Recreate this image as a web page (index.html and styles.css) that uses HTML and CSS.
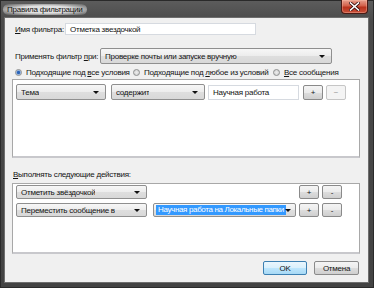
FILE: index.html
```html
<!DOCTYPE html>
<html lang="ru">
<head>
<meta charset="utf-8">
<title>Правила фильтрации</title>
<link rel="stylesheet" href="styles.css">
</head>
<body>
<div class="window">
  <div class="titlebar">
    <span class="title">Правила фильтрации</span>
    <span class="close">
      <svg width="11" height="9" viewBox="0 0 11 9"><path d="M1.5 1 L9.5 8 M9.5 1 L1.5 8" stroke="#3a1010" stroke-width="3.2" stroke-linecap="square"/><path d="M1.5 1 L9.5 8 M9.5 1 L1.5 8" stroke="#ffffff" stroke-width="1.6" stroke-linecap="square"/></svg>
    </span>
  </div>
  <div class="client">
    <div class="row name-row">
      <span class="lbl name-lbl"><u>И</u>мя фильтра:</span>
      <div class="textbox name-input">Отметка звездочкой</div>
    </div>
    <div class="row apply-row">
      <span class="lbl apply-lbl">Применять фильтр <u>п</u>ри:</span>
      <div class="combo apply-combo"><span class="ctext">Проверке почты или запуске вручную</span><i class="arrow"></i></div>
    </div>
    <div class="radios">
      <span class="radio-item r1"><i class="radio checked"></i>Подходящие под&nbsp;<u>в</u>се условия</span>
      <span class="radio-item r2"><i class="radio"></i>Подходящие под&nbsp;<u>л</u>юбое из условий</span>
      <span class="radio-item r3"><i class="radio"></i><u>В</u>се сообщения</span>
    </div>
    <div class="box cond-box">
      <div class="brow">
        <div class="combo c-tema"><span class="ctext">Тема</span><i class="arrow"></i></div>
        <div class="combo c-op"><span class="ctext">содержит</span><i class="arrow"></i></div>
        <div class="textbox c-val">Научная работа</div>
        <div class="btn small first">+</div>
        <div class="btn small disabled">−</div>
      </div>
    </div>
    <div class="section-lbl"><u>В</u>ыполнять следующие действия:</div>
    <div class="box act-box">
      <div class="brow">
        <div class="combo a-act"><span class="ctext">Отметить звёздочкой</span><i class="arrow"></i></div>
        <div class="btn small push">+</div>
        <div class="btn small">-</div>
      </div>
      <div class="brow">
        <div class="combo a-act"><span class="ctext">Переместить сообщение в</span><i class="arrow"></i></div>
        <div class="combo a-folder"><span class="ctext sel">Научная работа на Локальные папки</span><i class="arrow"></i></div>
        <div class="btn small">+</div>
        <div class="btn small">-</div>
      </div>
    </div>
    <div class="footer">
      <div class="btn dlg default">OK</div>
      <div class="btn dlg">Отмена</div>
    </div>
  </div>
</div>
</body>
</html>
```
FILE: styles.css
```css
html, body {
  margin: 0;
  padding: 0;
}
body {
  width: 374px;
  height: 288px;
  overflow: hidden;
  font-family: "Liberation Sans", Arial, sans-serif;
  font-size: 8px;
  letter-spacing: -0.25px;
  color: #141414;
  background: #3a3a3a;
  white-space: nowrap;
}
u { text-decoration: underline; text-underline-offset: 1px; }

.window {
  width: 374px;
  height: 288px;
  box-sizing: border-box;
  background: linear-gradient(180deg, #5c5c5c 0px, #4a4a4a 20px, #434343 100%);
  border: 1px solid #2a2a2a;
  display: flex;
  flex-direction: column;
}
.titlebar {
  height: 16px;
  display: flex;
  align-items: flex-start;
  justify-content: space-between;
}
.title {
  margin: 3px 0 0 2px;
  line-height: 11px;
  color: #111;
  padding: 0 4px;
  background: radial-gradient(ellipse at center, rgba(232,232,232,0.95) 45%, rgba(200,200,200,0.6) 72%, rgba(120,120,120,0) 100%);
  border-radius: 6px;
}
.close {
  width: 27px;
  height: 14px;
  margin: -1px 5px 0 0;
  box-sizing: border-box;
  border: 1px solid #4a1a14;
  border-top: none;
  border-radius: 0 0 4px 4px;
  background: linear-gradient(180deg, #e7a08e 0%, #d2604a 45%, #b8321c 55%, #c9503a 100%);
  display: flex;
  align-items: center;
  justify-content: center;
  box-shadow: inset 0 0 0 1px rgba(255,200,180,0.35);
}
.close svg { display: block; }

.client {
  margin: 0 4px 4px 3px;
  flex: 1;
  background: #f0f0f0;
  border: 1px solid #6e6e6e;
  padding: 0 8px 0 7px;
  box-sizing: border-box;
}
.row {
  display: flex;
  align-items: center;
}
.lbl { padding-left: 3px; box-sizing: border-box; flex-shrink: 0; }
.name-row { margin-top: 5px; height: 12px; }
.name-lbl { width: 53px; }
.textbox {
  background: #fff;
  border: 1px solid #d6dae0;
  box-sizing: border-box;
  padding-left: 4px;
  display: flex;
  align-items: center;
  overflow: hidden;
  flex-shrink: 0;
}
.name-input { width: 191px; height: 12px; }

.apply-row { margin-top: 13px; height: 16px; }
.apply-lbl { width: 88px; }
.combo {
  position: relative;
  box-sizing: border-box;
  border: 1px solid #8f8f8f;
  border-radius: 2px;
  background: linear-gradient(180deg, #f7f7f7 0%, #ececec 50%, #dedede 51%, #d8d8d8 100%);
  display: flex;
  align-items: center;
  padding-left: 4px;
  flex-shrink: 0;
}
.ctext { overflow: hidden; }
.arrow {
  position: absolute;
  right: 6px;
  top: 50%;
  margin-top: -1px;
  width: 0;
  height: 0;
  border-left: 3px solid transparent;
  border-right: 3px solid transparent;
  border-top: 3px solid #111;
}
.apply-combo { width: 232px; height: 16px; }

.radios {
  display: flex;
  align-items: center;
  height: 12px;
  margin-top: 2px;
  padding-left: 3px;
}
.radio-item {
  display: flex;
  align-items: center;
  flex-shrink: 0;
}
.r1 { width: 118px; }
.r2 { width: 140px; }
.radio {
  flex-shrink: 0;
  width: 7px;
  height: 7px;
  box-sizing: border-box;
  border-radius: 50%;
  border: 1px solid #8e8f8f;
  background: radial-gradient(circle, #ececec 0%, #cfcfcf 100%);
  margin-right: 4px;
  position: relative;
}
.radio.checked {
  background: radial-gradient(circle, #2a63b8 0%, #2a63b8 35%, #9fbde6 60%, #dde6f2 100%);
}

.box {
  background: #fff;
  border: 1px solid #a8a8a8;
  border-bottom: 2px solid #c8c8cc;
  box-sizing: border-box;
}
.cond-box {
  margin-top: 1px;
  height: 79px;
  padding: 4px 13px 0 3px;
}
.brow {
  display: flex;
  align-items: center;
}
.c-tema { width: 90px; height: 16px; }
.c-op { width: 94px; height: 16px; margin-left: 5px; }
.c-val { width: 91px; height: 15px; margin-left: 3px; }
.btn {
  box-sizing: border-box;
  border: 1px solid #8a8a8a;
  border-radius: 2px;
  background: linear-gradient(180deg, #f4f4f4 0%, #ebebeb 50%, #dddddd 51%, #cfcfcf 100%);
  display: flex;
  align-items: center;
  justify-content: center;
  flex-shrink: 0;
}
.btn.small { width: 20px; height: 15px; margin-left: 3px; }
.btn.small.first { margin-left: 4px; }
.btn.disabled {
  border-color: #c6c6c6;
  background: #f4f4f4;
  color: #9a9a9a;
}

.section-lbl {
  margin-top: 11px;
  height: 12px;
  line-height: 12px;
  padding-left: 1px;
}
.act-box {
  margin-top: 2px;
  height: 71px;
  padding: 1px 17px 0 3px;
  display: flex;
  flex-direction: column;
  gap: 4px;
}
.act-box .brow { height: 14px; }
.a-act { width: 131px; height: 14px; }
.a-folder { width: 143px; height: 14px; margin-left: 6px; padding-left: 2px; }
.a-folder .arrow { right: 4px; }
.sel {
  background: #3399ff;
  color: #fff;
  padding: 0 2px;
  line-height: 10px;
  letter-spacing: -0.35px;
}
.act-box .btn.small { height: 14px; }
.btn.small.push { margin-left: auto; }

.footer {
  display: flex;
  justify-content: flex-end;
  gap: 7px;
  margin-top: 7px;
  padding-right: 1px;
}
.btn.dlg { width: 45px; height: 14px; }
.btn.default {
  width: 44px;
  border-color: #3c7fb1;
  background: linear-gradient(180deg, #eaf6fd 0%, #d9f0fc 50%, #bee6fd 51%, #a7d9f5 100%);
}
```
